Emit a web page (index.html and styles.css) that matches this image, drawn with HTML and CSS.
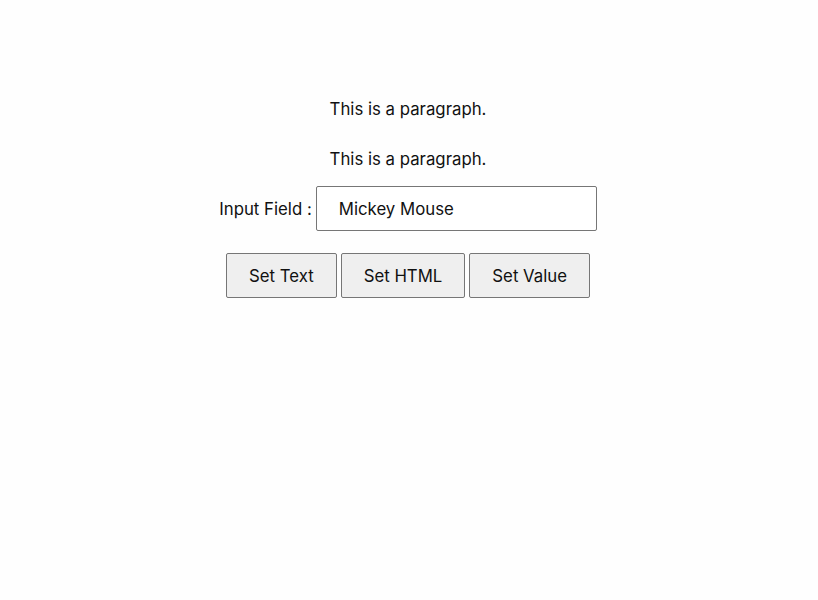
FILE: index.html
```html
<!DOCTYPE html>
<html lang="en">
<head>
    <meta charset="UTF-8">
    <title>jQuery Set Content</title>
    <link rel="stylesheet" href="styles.css">
</head>
<body>
    <div class="wrap">
        <p id="p1">This is a paragraph.</p>
        <p id="p2">This is a paragraph.</p>
        <div class="field">
            <label for="test">Input Field :</label>
            <input type="text" id="test" value="Mickey Mouse">
        </div>
        <div class="buttons">
            <button id="btn1">Set Text</button>
            <button id="btn2">Set HTML</button>
            <button id="btn3">Set Value</button>
        </div>
    </div>
</body>
</html>
```

FILE: styles.css
```css
body {
    margin: 0;
    background: #fefefe;
    font-family: Inter, "Noto Sans", sans-serif;
    font-size: 16.8px;
    color: #111;
}
.wrap {
    display: flex;
    flex-direction: column;
    align-items: center;
    padding: 99px 2px 0 0;
}
p {
    margin: 0 0 30px;
    line-height: 20px;
}
#p2 {
    margin-bottom: 17px;
}
.field {
    display: flex;
    align-items: center;
    gap: 4px;
}
input {
    width: 281px;
    height: 45px;
    box-sizing: border-box;
    padding: 0 22px;
    border: 1px solid #767676;
    border-radius: 2px;
    font-family: inherit;
    font-size: 16.8px;
    color: #111;
    background: #fff;
}
.buttons {
    display: flex;
    gap: 4px;
    margin-top: 22px;
}
button {
    height: 45px;
    padding: 0 22px;
    border: 1px solid #767676;
    border-radius: 2px;
    background: #efefef;
    font-family: inherit;
    font-size: 16.8px;
    color: #111;
}
```
